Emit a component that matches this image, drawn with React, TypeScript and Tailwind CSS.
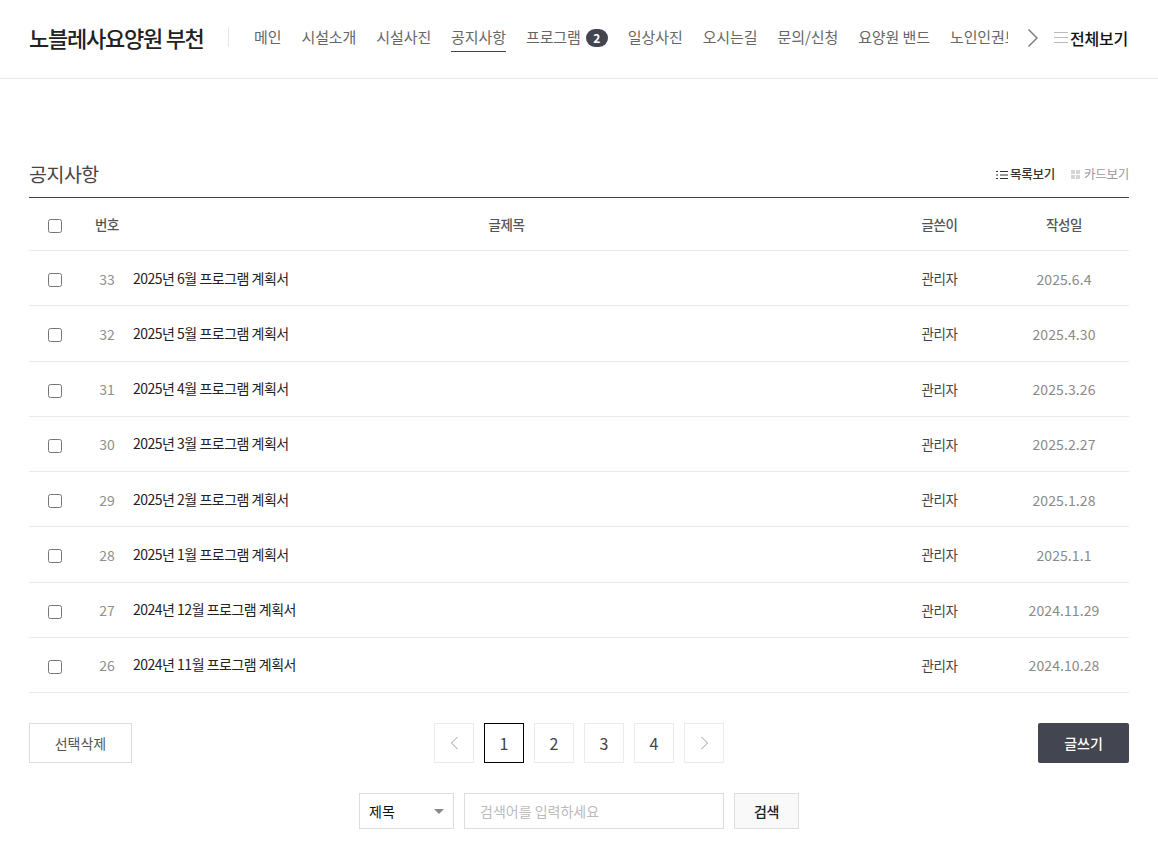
const navItems = ["메인", "시설소개", "시설사진", "공지사항", "프로그램", "일상사진", "오시는길", "문의/신청", "요양원 밴드", "노인인권보호"];

const posts = [
  { no: 33, title: "2025년 6월 프로그램 계획서", date: "2025.6.4" },
  { no: 32, title: "2025년 5월 프로그램 계획서", date: "2025.4.30" },
  { no: 31, title: "2025년 4월 프로그램 계획서", date: "2025.3.26" },
  { no: 30, title: "2025년 3월 프로그램 계획서", date: "2025.2.27" },
  { no: 29, title: "2025년 2월 프로그램 계획서", date: "2025.1.28" },
  { no: 28, title: "2025년 1월 프로그램 계획서", date: "2025.1.1" },
  { no: 27, title: "2024년 12월 프로그램 계획서", date: "2024.11.29" },
  { no: 26, title: "2024년 11월 프로그램 계획서", date: "2024.10.28" },
];

function Header() {
  return (
    <header className="flex h-[79px] items-center border-b border-[#ebebeb] pl-[29px] pr-[29px]">
      <h1 className="mb-[3px] w-[175px] shrink-0 whitespace-nowrap text-[22px] font-medium tracking-[-1.25px] text-[#222]">노블레사요양원 부천</h1>
      <div className="mb-[4px] ml-[24px] mr-[25px] h-[20px] w-px shrink-0 bg-[#e5e5e5]" />
      <nav className="mb-[3px] flex w-[754px] shrink-0 gap-[20px] overflow-hidden">
        {navItems.map((item) => (
          <a
            key={item}
            className={`flex h-[28px] shrink-0 items-center whitespace-nowrap text-[15px] tracking-[-0.09px] text-[#666] ${
              item === "공지사항" ? "border-b border-[#444] text-[#555]" : ""
            }`}
          >
            {item}
            {item === "프로그램" && (
              <span className="ml-[5px] flex h-[18px] w-[22px] items-center justify-center rounded-full bg-[#434650] text-[12px] font-bold tracking-normal text-white">2</span>
            )}
          </a>
        ))}
      </nav>
      <svg width="12" height="20" viewBox="0 0 12 20" fill="none" stroke="#777" strokeWidth="1.4" className="mb-[3px] ml-[19px] shrink-0">
        <path d="M1.5 1.5 10 10l-8.5 8.5" />
      </svg>
      <div className="mb-[3px] ml-[15px] flex shrink-0 items-center">
        <svg width="14" height="13" viewBox="0 0 14 13" stroke="#bbb" strokeWidth="1" className="mr-[2px]">
          <path d="M0 1.5h14M0 6.5h14M0 11.5h14" />
        </svg>
        <span className="whitespace-nowrap text-[16px] font-medium tracking-[-0.2px] text-[#111]">전체보기</span>
      </div>
    </header>
  );
}

function ViewToggle() {
  return (
    <div className="mt-[2px] flex items-center gap-[16px] text-[12.5px] tracking-[-0.25px]">
      <span className="flex items-center gap-[2px] font-medium text-[#333]">
        <svg width="12" height="10" viewBox="0 0 12 10" stroke="#333" strokeWidth="1">
          <path d="M0 1.5h2M4 1.5h8M0 5h2M4 5h8M0 8.5h2M4 8.5h8" />
        </svg>
        목록보기
      </span>
      <span className="flex items-center gap-[4px] text-[#999]">
        <svg width="9" height="9" viewBox="0 0 9 9" fill="#d5d5d5">
          <path d="M0 0h4v4H0zM5 0h4v4H5zM0 5h4v4H0zM5 5h4v4H5z" />
        </svg>
        카드보기
      </span>
    </div>
  );
}

function Board() {
  return (
    <div>
      <div className="flex items-center border-b border-[#444] pb-[9px]">
        <h2 className="flex-1 text-[19.5px] tracking-[-0.5px] text-[#444]">공지사항</h2>
        <ViewToggle />
      </div>
      <div className="flex h-[52.75px] items-center border-b border-[#ebebeb] text-[13.5px] font-medium tracking-[-0.5px] text-[#555]">
        <div className="flex w-[52px] justify-center pt-[4px]">
          <input type="checkbox" className="size-[14px]" />
        </div>
        <div className="w-[52px] text-center">번호</div>
        <div className="flex-1 text-center">글제목</div>
        <div className="w-[119px] text-center">글쓴이</div>
        <div className="w-[130px] text-center">작성일</div>
      </div>
      {posts.map((post) => (
        <div key={post.no} className="flex h-[55.25px] items-center border-b border-[#ebebeb]">
          <div className="flex w-[52px] justify-center pt-[4px]">
            <input type="checkbox" className="size-[14px]" />
          </div>
          <div className="w-[52px] pt-[2px] text-center text-[14px] text-[#8f8f8f]">{post.no}</div>
          <div className="flex-1 text-[14px] tracking-[-0.5px] text-[#222]">{post.title}</div>
          <div className="w-[119px] text-center text-[13.5px] tracking-[-0.5px] text-[#444]">관리자</div>
          <div className="w-[130px] pt-[2px] text-center text-[14px] tracking-[0.1px] text-[#8a8a8a]">{post.date}</div>
        </div>
      ))}
    </div>
  );
}

function PageButton({ active, children }: { active?: boolean; children: React.ReactNode }) {
  return (
    <a
      className={`flex size-[40px] items-center justify-center border text-[16px] text-[#444] ${
        active ? "border-black text-[#111]" : "border-[#ebebeb]"
      }`}
    >
      {children}
    </a>
  );
}

function Footer() {
  return (
    <>
      <div className="relative mt-[30px] flex items-center justify-between">
        <button className="h-[40px] w-[103px] border border-[#ddd] text-[14px] text-[#555]">선택삭제</button>
        <div className="absolute left-[405px] flex gap-[10px]">
          <PageButton>
            <svg width="9" height="14" viewBox="0 0 9 14" fill="none" stroke="#999" strokeWidth="1">
              <path d="M7.5 1 1.5 7l6 6" />
            </svg>
          </PageButton>
          <PageButton active>1</PageButton>
          <PageButton>2</PageButton>
          <PageButton>3</PageButton>
          <PageButton>4</PageButton>
          <PageButton>
            <svg width="9" height="14" viewBox="0 0 9 14" fill="none" stroke="#999" strokeWidth="1">
              <path d="M1.5 1l6 6-6 6" />
            </svg>
          </PageButton>
        </div>
        <button className="h-[40px] w-[91px] rounded-[2px] bg-[#434650] text-[14px] font-medium text-white">글쓰기</button>
      </div>
      <div className="mt-[30px] flex justify-center gap-[10px]">
        <div className="flex h-[36px] w-[95px] items-center justify-between border border-[#ddd] pl-[9px] pr-[9px]">
          <span className="text-[14px] text-[#111]">제목</span>
          <span className="h-0 w-0 border-x-[5px] border-t-[5px] border-x-transparent border-t-[#888]" />
        </div>
        <input
          placeholder="검색어를 입력하세요"
          className="h-[36px] w-[260px] border border-[#ddd] px-[15px] text-[14px] placeholder:text-[#bbb]"
        />
        <button className="h-[36px] w-[65px] border border-[#ddd] bg-[#f9f9f9] text-[14px] font-medium tracking-[-0.3px] text-[#222]">검색</button>
      </div>
    </>
  );
}

export default function App() {
  return (
    <div className="min-h-[858px] bg-white font-['Noto_Sans_CJK_KR','Noto_Sans',sans-serif]">
      <Header />
      <main className="px-[29px] pt-[80px]">
        <Board />
        <Footer />
      </main>
    </div>
  );
}
